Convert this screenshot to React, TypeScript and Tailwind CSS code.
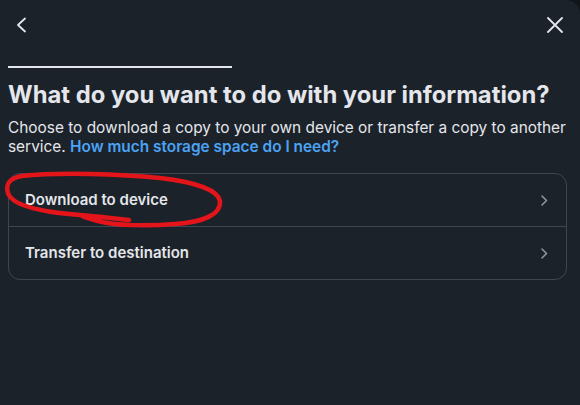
export default function App() {
  return (
    <div className="w-[580px] h-[405px] bg-[#10161a]">
      <div className="relative w-full h-full bg-[#1b2229] rounded-tr-[14px] px-2 text-[#e4e6eb] [font-family:Inter,'Noto_Sans',sans-serif]">
        {/* Header */}
        <div className="flex items-center justify-between h-[50px]">
          <button className="ml-[1px] w-6 h-6 flex items-center justify-center text-[#e4e6eb]">
            <svg width="12" height="16" viewBox="0 0 12 16" fill="none" stroke="currentColor" strokeWidth="1.8" strokeLinecap="round" strokeLinejoin="round">
              <path d="M10 1.5 3 8l7 6.5" />
            </svg>
          </button>
          <button className="w-6 h-6 mr-[5px] flex items-center justify-center text-[#e4e6eb]">
            <svg width="16" height="16" viewBox="0 0 16 16" fill="none" stroke="currentColor" strokeWidth="1.8" strokeLinecap="round">
              <path d="M1 1l14 14M15 1 1 15" />
            </svg>
          </button>
        </div>

        <div className="mt-[16px] h-[2px] w-[224px] bg-[#e4e6eb]" />

        <h1 className="mt-[12px] text-[23.8px] leading-[30px] font-bold text-[#e4e6eb]">
          What do you want to do with your information?
        </h1>
        <p className="mt-[8px] text-[15.4px] leading-[19px] text-[#e4e6eb]">
          Choose to download a copy to your own device or transfer a copy to another service.{' '}
          <span className="font-semibold text-[#4ba3f5]">How much storage space do I need?</span>
        </p>

        {/* Options */}
        <div className="mt-[17px] mr-[5px] rounded-[12px] border border-[#3b4854]">
          <div className="flex items-center justify-between h-[53px] pl-4 pr-[18px] border-b border-[#3b4854]">
            <span className="text-[15px] font-semibold text-[#e4e6eb]">Download to device</span>
            <Chevron />
          </div>
          <div className="flex items-center justify-between h-[52px] pl-4 pr-[18px]">
            <span className="text-[15px] font-semibold text-[#e4e6eb]">Transfer to destination</span>
            <Chevron />
          </div>
        </div>

        {/* hand-drawn red annotation */}
        <svg className="absolute left-0 top-0 pointer-events-none" width="580" height="405" viewBox="0 0 580 405" fill="none">
          <path
            d="M129 220 C110 218 95 216 80 215 C40 212 12 205 8 193 C5 184 10 178 22 176 C60 172 120 174 160 178 C195 182 218 190 220 201 C221 214 205 222 175 224 C150 226 115 226 98 221 C90 219 85 217 82 216"
            stroke="#e3151b"
            strokeWidth="4.5"
            strokeLinecap="round"
            strokeLinejoin="round"
          />
        </svg>
      </div>
    </div>
  )
}

function Chevron() {
  return (
    <svg width="7" height="11" viewBox="0 0 7 11" fill="none" stroke="#8d99a3" strokeWidth="1.5" strokeLinecap="round" strokeLinejoin="round">
      <path d="M1 1l4.5 4.5L1 10" />
    </svg>
  )
}
